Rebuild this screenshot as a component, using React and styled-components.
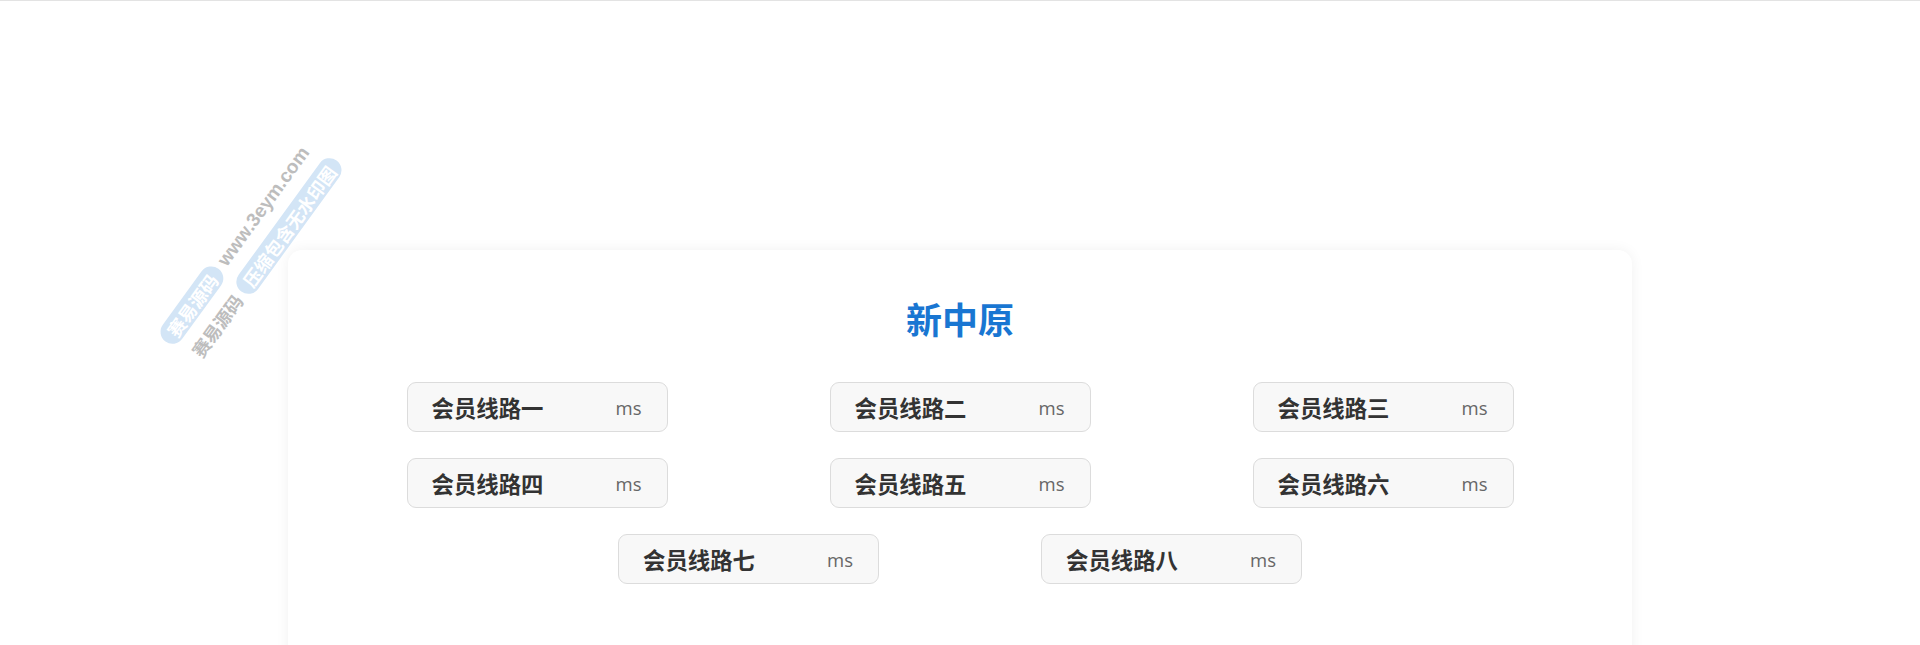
import React from "react";
import styled, { createGlobalStyle } from "styled-components";

const GlobalStyle = createGlobalStyle`
  html, body {
    margin: 0;
    padding: 0;
    background: #ffffff;
    overflow: hidden;
  }
  body {
    font-family: "Noto Sans CJK SC", "Noto Sans", sans-serif;
  }
`;

const Page = styled.div`
  position: relative;
  min-height: 645px;
  border-top: 1px solid #e3e3e3;
  padding-top: 249px;
  box-sizing: border-box;
`;

const Card = styled.section`
  width: 70%;
  margin: 0 auto;
  background: #ffffff;
  border-radius: 14px;
  box-shadow: 0 0 14px rgba(0, 0, 0, 0.06);
  padding: 50px 0 90px;
  box-sizing: border-box;
  display: flex;
  flex-direction: column;
  align-items: center;
`;

const Title = styled.h1`
  margin: 0;
  font-family: "Noto Sans CJK SC", sans-serif;
  font-size: 36px;
  line-height: 36px;
  font-weight: 700;
  color: #1976d2;
`;

const LineGrid = styled.div`
  margin-top: 46px;
  width: 1110px;
  display: flex;
  flex-wrap: wrap;
  justify-content: center;
  column-gap: 162px;
  row-gap: 26px;
`;

const LineButton = styled.div`
  width: 261px;
  height: 50px;
  box-sizing: border-box;
  display: flex;
  align-items: center;
  justify-content: space-between;
  padding: 0 25px 0 24px;
  background: #f8f8f8;
  border: 1px solid #dcdcdc;
  border-radius: 9px;
`;

const LineName = styled.span`
  font-family: "Noto Sans CJK SC", sans-serif;
  font-size: 22.4px;
  font-weight: 700;
  color: #333333;
`;

const Latency = styled.span`
  font-family: "Open Sans", "Noto Sans", sans-serif;
  font-size: 18.5px;
  color: #666666;
`;

const Watermark = styled.div`
  position: absolute;
  left: 251px;
  top: 250px;
  transform: translate(-50%, -50%) rotate(-54deg);
  display: flex;
  flex-direction: column;
  gap: 8px;
  pointer-events: none;
  white-space: nowrap;
`;

const MarkRow = styled.div`
  display: flex;
  align-items: center;
  gap: 6px;
  margin-left: ${(p) => p.$shift || 0}px;
`;

const MarkPill = styled.span`
  background: #d3e5f6;
  color: #ffffff;
  font-family: "Noto Sans CJK SC", sans-serif;
  font-weight: 700;
  font-size: 18px;
  line-height: 24px;
  padding: 0 9px;
  border-radius: 12px;
`;

const MarkText = styled.span`
  color: #bdbdbd;
  font-family: ${(p) => (p.$latin ? '"Liberation Sans", sans-serif' : '"Noto Sans CJK SC", sans-serif')};
  font-weight: 700;
  font-size: ${(p) => (p.$latin ? 19 : 18)}px;
  line-height: 24px;
`;

const lines = [
  "会员线路一",
  "会员线路二",
  "会员线路三",
  "会员线路四",
  "会员线路五",
  "会员线路六",
  "会员线路七",
  "会员线路八",
];

export default function App() {
  return (
    <>
      <GlobalStyle />
      <Page>
        <Card>
          <Title>新中原</Title>
          <LineGrid>
            {lines.map((name) => (
              <LineButton key={name}>
                <LineName>{name}</LineName>
                <Latency>ms</Latency>
              </LineButton>
            ))}
          </LineGrid>
        </Card>
        <Watermark>
          <MarkRow>
            <MarkPill>赛易源码</MarkPill>
            <MarkText $latin>www.3eym.com</MarkText>
          </MarkRow>
          <MarkRow $shift={7}>
            <MarkText>赛易源码</MarkText>
            <MarkPill>压缩包含无水印图</MarkPill>
          </MarkRow>
        </Watermark>
      </Page>
    </>
  );
}
